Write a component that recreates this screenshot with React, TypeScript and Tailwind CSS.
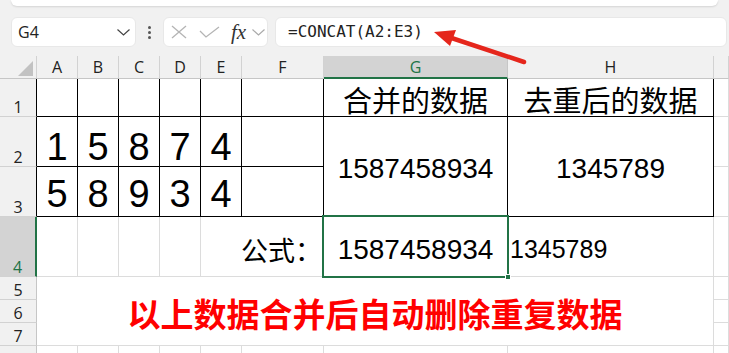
import React from "react";

const HDR =
  "bg-[#f1f1f1] border-r border-b border-r-[#d2d2d2] border-b-[#c6c6c6] flex items-center justify-center text-[16px] text-[#222] font-['Open_Sans',sans-serif]";
const RH =
  "bg-[#f1f1f1] border-r border-b border-b-[#d2d2d2] flex items-end justify-center pb-[1px] text-[16px] leading-none text-[#222] font-['Open_Sans',sans-serif]";
const LIGHT = "border-r border-b border-[#dcdcdc] bg-white";
const BLK = "border-r border-b border-black bg-white";
const DIG =
  "border-r border-b border-black bg-white flex items-end justify-center text-[38px] leading-none text-black font-['Liberation_Sans',sans-serif]";

export default function App() {
  return (
    <div className="relative w-[729px] h-[353px] overflow-hidden bg-[#f1f1f1]">
      {/* top ribbon edge + formula bar */}
      <div className="h-[56px] flex flex-col">
        <div className="mx-[11px] h-[6px] bg-white rounded-b-[8px] shadow-[0_1px_2px_rgba(0,0,0,0.12)]" />
        <div className="mt-[11px] h-[30px] flex items-stretch">
          <div className="ml-[11px] w-[125px] bg-white rounded-[6px] flex items-center pl-[6px] pr-[5px] border border-[#e8e8e8]">
            <span className="text-[16px] text-[#222] font-['Open_Sans',sans-serif] leading-none">G4</span>
            <svg className="ml-auto" width="13" height="7" viewBox="0 0 13 7">
              <polyline points="0.5,0.5 6.5,6 12.5,0.5" fill="none" stroke="#444" strokeWidth="1.2" />
            </svg>
          </div>
          <div className="w-[27px] flex items-center justify-center">
            <div className="flex flex-col gap-[2px]">
              <div className="w-[3px] h-[3px] rounded-full bg-[#555]" />
              <div className="w-[3px] h-[3px] rounded-full bg-[#555]" />
              <div className="w-[3px] h-[3px] rounded-full bg-[#555]" />
            </div>
          </div>
          <div className="w-[105px] bg-white rounded-[6px] flex items-center pl-[7px] border border-[#e8e8e8]">
            <svg width="16" height="14" viewBox="0 0 16 14">
              <line x1="1" y1="1" x2="15" y2="13" stroke="#b4b4b4" strokeWidth="1.3" />
              <line x1="15" y1="1" x2="1" y2="13" stroke="#b4b4b4" strokeWidth="1.3" />
            </svg>
            <svg className="ml-[12px]" width="21" height="12" viewBox="0 0 21 12">
              <polyline points="1,5 7,11 20,1" fill="none" stroke="#b4b4b4" strokeWidth="1.3" />
            </svg>
            <span className="ml-[11px] text-[21px] leading-none italic text-[#333] font-['Liberation_Serif',serif]">
              fx
            </span>
            <svg className="ml-[6px]" width="13" height="7" viewBox="0 0 13 7">
              <polyline points="0.5,0.5 6.5,6 12.5,0.5" fill="none" stroke="#aaa" strokeWidth="1.2" />
            </svg>
          </div>
          <div className="ml-[7px] mr-[2px] flex-1 bg-white rounded-[6px] flex items-center pl-[12px] border border-[#e8e8e8]">
            <span className="text-[16px] leading-none text-[#222] font-['DejaVu_Sans_Mono',monospace]">
              =CONCAT(A2:E3)
            </span>
          </div>
        </div>
      </div>

      {/* sheet grid */}
      <div className="relative grid grid-cols-[37px_41px_41px_41px_41px_41px_82px_184px_206px_1fr] grid-rows-[23px_38px_50px_50px_60px_23px_23px_23px_23px]">
        {/* header row */}
        <div className="bg-[#f1f1f1] border-r border-b border-r-[#d2d2d2] border-b-[#c6c6c6] flex items-end justify-end pr-[3px] pb-[2px]">
          <svg width="15" height="15" viewBox="0 0 15 15">
            <polygon points="15,0 15,15 0,15" fill="#c2c2c2" />
          </svg>
        </div>
        <div className={HDR}>A</div>
        <div className={HDR}>B</div>
        <div className={HDR}>C</div>
        <div className={HDR}>D</div>
        <div className={HDR}>E</div>
        <div className={HDR}>F</div>
        <div className="bg-[#d3d3d3] border-r border-b-2 border-r-[#c6c6c6] border-b-[#217346] flex items-center justify-center text-[16px] text-[#217346] font-['Open_Sans',sans-serif]">
          G
        </div>
        <div className={HDR}>H</div>
        <div className={HDR}></div>

        {/* row 1 */}
        <div className={`${RH} border-r-black`}>1</div>
        <div className={BLK} />
        <div className={BLK} />
        <div className={BLK} />
        <div className={BLK} />
        <div className={BLK} />
        <div className={BLK} />
        <div className="border-r border-b border-black bg-white flex items-end justify-center pb-[2px] text-[29px] leading-none text-black font-['Noto_Sans_CJK_SC',sans-serif]">
          合并的数据
        </div>
        <div className="border-r border-b border-black bg-white flex items-end justify-center pb-[2px] text-[29px] leading-none text-black font-['Noto_Sans_CJK_SC',sans-serif]">
          去重后的数据
        </div>
        <div className={LIGHT} />

        {/* row 2 */}
        <div className={`${RH} border-r-black`}>2</div>
        <div className={DIG}>1</div>
        <div className={DIG}>5</div>
        <div className={DIG}>8</div>
        <div className={DIG}>7</div>
        <div className={DIG}>4</div>
        <div className={BLK} />
        <div className="row-span-2 border-r border-b border-black bg-white flex items-center justify-center pt-[4px] text-[28px] leading-none text-black font-['Liberation_Sans',sans-serif]">
          1587458934
        </div>
        <div className="row-span-2 border-r border-b border-black bg-white flex items-center justify-center pt-[4px] text-[28px] leading-none text-black font-['Liberation_Sans',sans-serif]">
          1345789
        </div>
        <div className={LIGHT} />

        {/* row 3 */}
        <div className={`${RH} border-r-black`}>3</div>
        <div className={`${DIG} pb-[3px]`}>5</div>
        <div className={`${DIG} pb-[3px]`}>8</div>
        <div className={`${DIG} pb-[3px]`}>9</div>
        <div className={`${DIG} pb-[3px]`}>3</div>
        <div className={`${DIG} pb-[3px]`}>4</div>
        <div className={BLK} />
        <div className={LIGHT} />

        {/* row 4 */}
        <div className="bg-[#d3d3d3] border-r-2 border-b border-r-[#217346] border-b-[#d2d2d2] flex items-end justify-center pb-[1px] text-[16px] leading-none text-[#217346] font-['Open_Sans',sans-serif]">
          4
        </div>
        <div className={LIGHT} />
        <div className={LIGHT} />
        <div className={LIGHT} />
        <div className={LIGHT} />
        <div className="col-span-2 border-r border-b border-[#dcdcdc] bg-white flex items-center justify-end pr-[1px] pt-[5px] text-[27px] leading-none text-black font-['Noto_Sans_CJK_SC',sans-serif]">
          公式：
        </div>
        <div className="border-r border-b border-[#dcdcdc] bg-white flex items-center justify-center pt-[6px] text-[28px] leading-none text-black font-['Liberation_Sans',sans-serif]">
          1587458934
        </div>
        <div className="border-r border-b border-[#dcdcdc] bg-white flex items-center justify-start pl-[2px] pt-[6px] text-[25px] leading-none text-black font-['Liberation_Sans',sans-serif]">
          1345789
        </div>
        <div className={LIGHT} />

        {/* rows 5-7 */}
        <div className={`${RH} border-r-[#c6c6c6]`}>5</div>
        <div className="col-span-8 row-span-3 border-r border-b border-[#dcdcdc] bg-white flex items-center justify-center pt-[4px] text-[33px] leading-none font-bold text-[#ff0000] font-['Noto_Sans_CJK_SC',sans-serif]">
          以上数据合并后自动删除重复数据
        </div>
        <div className={LIGHT} />
        <div className={`${RH} border-r-[#c6c6c6]`}>6</div>
        <div className={LIGHT} />
        <div className={`${RH} border-r-[#c6c6c6]`}>7</div>
        <div className={LIGHT} />

        {/* row 8 */}
        <div className={`${RH} border-r-[#c6c6c6]`}>8</div>
        <div className={LIGHT} />
        <div className={LIGHT} />
        <div className={LIGHT} />
        <div className={LIGHT} />
        <div className={LIGHT} />
        <div className={LIGHT} />
        <div className={LIGHT} />
        <div className={LIGHT} />
        <div className={LIGHT} />

        {/* selection of G4 */}
        <div className="absolute left-[322px] top-[159px] w-[187px] h-[63px] border-2 border-[#217346] pointer-events-none" />
        <div className="absolute left-[505px] top-[218px] w-[6px] h-[6px] bg-[#217346] border border-white pointer-events-none" />
      </div>

      {/* red arrow */}
      <svg className="absolute left-0 top-0 pointer-events-none" width="729" height="353" viewBox="0 0 729 353">
        <line x1="524" y1="62" x2="450" y2="37.5" stroke="#e5261c" strokeWidth="4.5" strokeLinecap="round" />
        <polygon points="434,32 456,30 450,46" fill="#e5261c" />
      </svg>
    </div>
  );
}
